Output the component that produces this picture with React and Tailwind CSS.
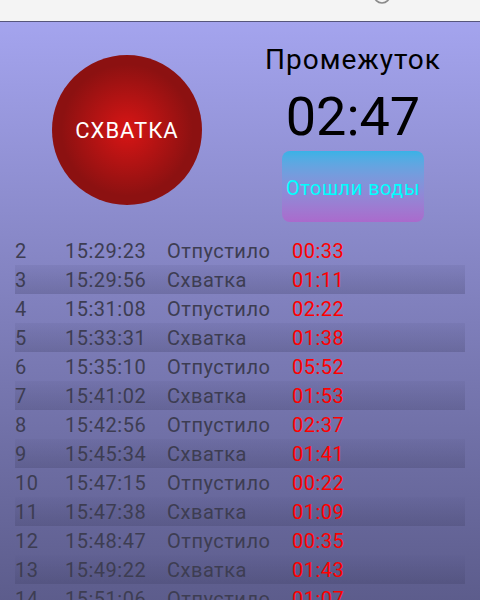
import React from "react";

const rows = [
  ["2", "15:29:23", "Отпустило", "00:33"],
  ["3", "15:29:56", "Схватка", "01:11"],
  ["4", "15:31:08", "Отпустило", "02:22"],
  ["5", "15:33:31", "Схватка", "01:38"],
  ["6", "15:35:10", "Отпустило", "05:52"],
  ["7", "15:41:02", "Схватка", "01:53"],
  ["8", "15:42:56", "Отпустило", "02:37"],
  ["9", "15:45:34", "Схватка", "01:41"],
  ["10", "15:47:15", "Отпустило", "00:22"],
  ["11", "15:47:38", "Схватка", "01:09"],
  ["12", "15:48:47", "Отпустило", "00:35"],
  ["13", "15:49:22", "Схватка", "01:43"],
  ["14", "15:51:06", "Отпустило", "01:07"],
];

export default function App() {
  return (
    <div
      className="w-[480px] h-[600px] overflow-hidden flex flex-col"
      style={{ fontFamily: "Roboto, 'Noto Sans', sans-serif" }}
    >
      <div className="relative h-[22px] shrink-0 bg-[#f4f4f4] border-b border-[#56567c]">
        <svg
          className="absolute left-[371px] top-[-16px]"
          width="22"
          height="22"
          viewBox="0 0 22 22"
        >
          <circle cx="11" cy="11" r="8" fill="none" stroke="#8a8a8a" strokeWidth="1.6" />
        </svg>
      </div>
      <div className="flex-1 flex flex-col bg-linear-to-b from-[#a4a4ee] to-[#5b5b8a]">
        <div className="flex">
          <div className="w-[254px] flex justify-center pt-[33px]">
            <div className="w-[150px] h-[150px] rounded-full bg-[radial-gradient(circle,#d81515_0%,#8c1111_62%)] flex items-center justify-center">
              <span className="text-white text-[22px] tracking-[1px] leading-none mt-[1px]">СХВАТКА</span>
            </div>
          </div>
          <div className="flex-1 pr-[28px] flex flex-col items-center">
            <div className="mt-[21px] text-[28px] tracking-[1px] leading-[33px] text-black">Промежуток</div>
            <div className="mt-[11px] text-[54px] leading-[60px] text-black">02:47</div>
            <div className="mt-[4px] w-[142px] h-[71px] rounded-[8px] bg-linear-to-b from-[#38b2e6] to-[#aa6acc] flex items-center justify-center">
              <span className="text-[#00ffff] text-[20px] tracking-[0.5px] leading-none mt-[2px]">Отошли воды</span>
            </div>
          </div>
        </div>
        <div className="mt-[14px] mx-[15px] flex flex-col">
          {rows.map((r, i) => (
            <div
              key={r[0]}
              className={
                "flex h-[29px] items-center text-[20px] tracking-[0.5px] leading-[29px] text-[#3d3d52] " +
                (i % 2 === 1 ? "bg-linear-to-b from-[#5c5c9029] to-[#3c3c6045]" : "")
              }
            >
              <span className="w-[50px] pt-[1px]">{r[0]}</span>
              <span className="w-[102px] pt-[1px]">{r[1]}</span>
              <span className="w-[125px] pt-[1px]">{r[2]}</span>
              <span className="pt-[1px] text-[#ff0000]">{r[3]}</span>
            </div>
          ))}
        </div>
      </div>
    </div>
  );
}
